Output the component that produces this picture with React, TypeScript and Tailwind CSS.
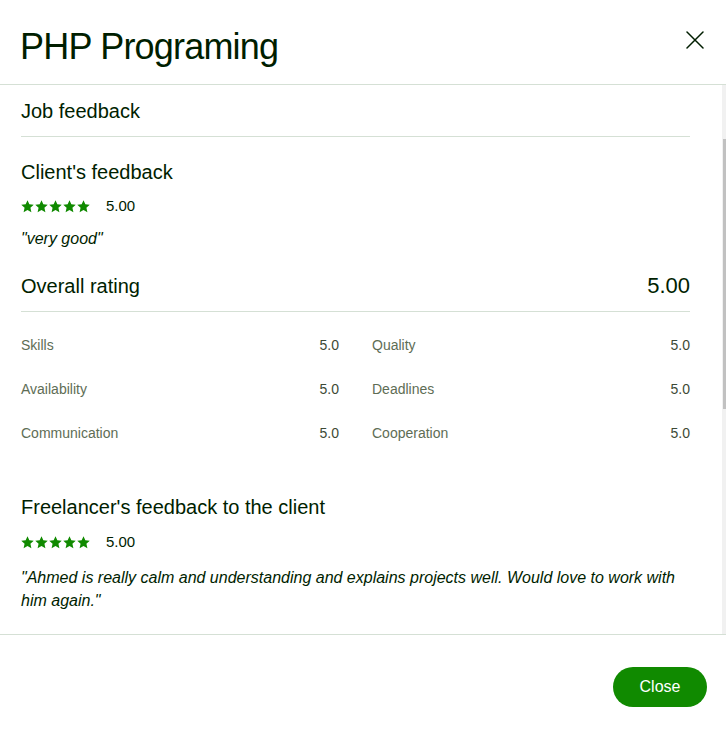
const skills = [
  ["Skills", "5.0", "Quality", "5.0"],
  ["Availability", "5.0", "Deadlines", "5.0"],
  ["Communication", "5.0", "Cooperation", "5.0"],
];

function Stars() {
  return (
    <div className="flex items-center gap-[1px]">
      {[0, 1, 2, 3, 4].map((i) => (
        <svg key={i} viewBox="0 0 24 24" className="h-[13px] w-[13px]" fill="#108a00">
          <path d="M12 0.5l3.4 7.5 8.1.8-6.1 5.5 1.8 8.1L12 18.3l-7.2 4.1 1.8-8.1L0.5 8.8l8.1-.8z" />
        </svg>
      ))}
    </div>
  );
}

function RatingRow({ value }: { value: string }) {
  return (
    <div className="flex h-[20px] items-center">
      <Stars />
      <span className="ml-[16px] text-[15px] leading-[20px] text-[#001e00]">{value}</span>
    </div>
  );
}

export default function App() {
  return (
    <div className="flex h-[735px] w-[726px] flex-col bg-white text-[#001e00]" style={{ fontFamily: '"Liberation Sans", Arial, sans-serif' }}>
      {/* header */}
      <div className="flex h-[85px] shrink-0 items-start justify-between border-b border-[#d5e0d5] pl-[20px] pr-[22px] pt-[29px]">
        <h1 className="text-[36px] leading-[36px] tracking-[-0.8px]">PHP Programing</h1>
        <svg viewBox="0 0 18 18" className="mt-[2px] h-[18px] w-[18px]" stroke="#001e00" strokeWidth={1.5} strokeLinecap="round">
          <path d="M1 1l16 16M17 1L1 17" />
        </svg>
      </div>

      {/* scroll body */}
      <div className="flex h-[549px] shrink-0 overflow-hidden">
        <div className="flex-1 pl-[21px] pr-[32px]">
          <div className="border-b border-[#d5e0d5] pb-[11px] pt-[12px]">
            <h2 className="text-[20px] leading-[28px]">Job feedback</h2>
          </div>

          <h3 className="mt-[21px] text-[20px] leading-[28px]">Client's feedback</h3>
          <div className="mt-[10px]">
            <RatingRow value="5.00" />
          </div>
          <p className="mt-[12px] text-[16px] italic leading-[22px]">"very good"</p>

          <div className="mt-[22px] flex items-center justify-between border-b border-[#d5e0d5] pb-[11px]">
            <h3 className="text-[20px] leading-[28px]">Overall rating</h3>
            <span className="text-[22px] leading-[28px]">5.00</span>
          </div>

          <div className="mt-[23px] flex flex-col gap-[24px]">
            {skills.map(([a, av, b, bv]) => (
              <div key={a} className="grid grid-cols-2 gap-x-[33px] text-[14px] leading-[20px]">
                <div className="flex justify-between">
                  <span className="text-[#5e6d55]">{a}</span>
                  <span className="text-[#3d4a36]">{av}</span>
                </div>
                <div className="flex justify-between">
                  <span className="text-[#5e6d55]">{b}</span>
                  <span className="text-[#3d4a36]">{bv}</span>
                </div>
              </div>
            ))}
          </div>

          <h3 className="mt-[50px] text-[20px] leading-[28px]">Freelancer's feedback to the client</h3>
          <div className="mt-[11px]">
            <RatingRow value="5.00" />
          </div>
          <p className="mt-[14px] text-[16px] italic leading-[23px]">
            "Ahmed is really calm and understanding and explains projects well. Would love to work with him again."
          </p>
        </div>
        <div className="w-[4px] shrink-0 bg-[#f1f1f1]">
          <div className="ml-[1px] mt-[54px] h-[270px] w-[3px] bg-[#c1c1c1]" />
        </div>
      </div>

      {/* footer */}
      <div className="flex flex-1 items-start justify-end border-t border-[#d5e0d5] pr-[19px] pt-[32px]">
        <button className="flex h-[40px] w-[94px] items-center justify-center rounded-full bg-[#108a00] text-[16px] text-white">
          Close
        </button>
      </div>
    </div>
  );
}
